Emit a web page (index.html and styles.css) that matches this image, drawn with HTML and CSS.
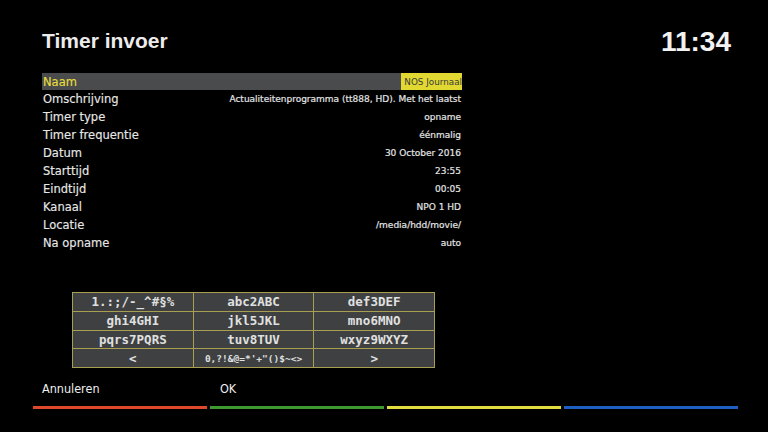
FILE: index.html
```html
<!DOCTYPE html>
<html>
<head>
<meta charset="utf-8">
<link rel="stylesheet" href="styles.css">
</head>
<body>
<div class="screen">
  <header class="header">
    <h1 class="title">Timer invoer</h1>
    <div class="clock">11:34</div>
  </header>
  <div class="list">
    <div class="row selected"><span class="label">Naam</span><span class="value edit">NOS Journaal</span></div>
    <div class="row"><span class="label">Omschrijving</span><span class="value">Actualiteitenprogramma (tt888, HD). Met het laatst</span></div>
    <div class="row"><span class="label">Timer type</span><span class="value">opname</span></div>
    <div class="row"><span class="label">Timer frequentie</span><span class="value">éénmalig</span></div>
    <div class="row"><span class="label">Datum</span><span class="value">30 October 2016</span></div>
    <div class="row"><span class="label">Starttijd</span><span class="value">23:55</span></div>
    <div class="row"><span class="label">Eindtijd</span><span class="value">00:05</span></div>
    <div class="row"><span class="label">Kanaal</span><span class="value">NPO 1 HD</span></div>
    <div class="row"><span class="label">Locatie</span><span class="value">/media/hdd/movie/</span></div>
    <div class="row"><span class="label">Na opname</span><span class="value">auto</span></div>
  </div>
  <div class="keyboard">
    <div class="key">1.:;/-_^#§%</div>
    <div class="key">abc2ABC</div>
    <div class="key">def3DEF</div>
    <div class="key">ghi4GHI</div>
    <div class="key">jkl5JKL</div>
    <div class="key">mno6MNO</div>
    <div class="key">pqrs7PQRS</div>
    <div class="key">tuv8TUV</div>
    <div class="key">wxyz9WXYZ</div>
    <div class="key">&lt;</div>
    <div class="key small">0,?!&amp;@=*'+"()$~&lt;&gt;</div>
    <div class="key">&gt;</div>
  </div>
  <div class="buttons">
    <span class="btn red-label">Annuleren</span>
    <span class="btn green-label">OK</span>
  </div>
  <div class="bars">
    <div class="bar red"></div>
    <div class="bar green"></div>
    <div class="bar yellow"></div>
    <div class="bar blue"></div>
  </div>
</div>
</body>
</html>
```
FILE: styles.css
```css
html, body {
  margin: 0;
  padding: 0;
  background: #000;
}
.screen {
  width: 768px;
  height: 432px;
  background: #000;
  display: flex;
  flex-direction: column;
  color: #e6e6e6;
  font-family: "DejaVu Sans", sans-serif;
  overflow: hidden;
}
.header {
  display: flex;
  justify-content: space-between;
  align-items: flex-start;
  padding: 26px 37px 0 42px;
  height: 46px;
}
.title {
  margin: 3px 0 0 0;
  font-family: "Liberation Sans", Arial, sans-serif;
  font-weight: bold;
  font-size: 21px;
  line-height: 24px;
  color: #ececec;
}
.clock {
  font-family: "Liberation Sans", Arial, sans-serif;
  font-weight: bold;
  font-size: 28px;
  line-height: 32px;
  color: #f2f2f2;
}
.list {
  margin-left: 42px;
  width: 420px;
  display: flex;
  flex-direction: column;
}
.row {
  height: 18px;
  display: flex;
  justify-content: space-between;
  align-items: center;
  padding-bottom: 3px;
  box-sizing: border-box;
}
.row.selected {
  background: #4a4b4d;
  height: 17px;
  margin-top: 1px;
  padding-bottom: 0;
  margin-bottom: 1px;
}
.label {
  font-size: 11.5px;
  color: #e8e8e8;
  padding-left: 1px;
  -webkit-text-stroke: 0.15px #e8e8e8;
}
.selected .label {
  color: #e8df3c;
  -webkit-text-stroke: 0.15px #e8df3c;
}
.value {
  font-size: 9px;
  color: #e4e4e4;
  padding-right: 1px;
  -webkit-text-stroke: 0.2px #e4e4e4;
}
.value.edit {
  background: #e1d832;
  color: #3a3a3a;
  -webkit-text-stroke: 0;
  font-size: 8.8px;
  align-self: stretch;
  display: flex;
  align-items: center;
  justify-content: flex-end;
  width: 61px;
  padding-right: 0;
}
.keyboard {
  margin: 39px 0 0 72px;
  width: 363px;
  display: grid;
  grid-template-columns: repeat(3, 1fr);
  grid-auto-rows: 17.75px;
  gap: 1px;
  background: #a8a050;
  border: 1px solid #a8a050;
  box-sizing: border-box;
}
.key {
  background: #3e4041;
  color: #e0e0e0;
  font-family: "DejaVu Sans Mono", monospace;
  font-weight: bold;
  font-size: 12.5px;
  display: flex;
  align-items: center;
  justify-content: center;
}
.key.small {
  font-size: 9.5px;
}
.buttons {
  display: flex;
  margin: 13px 0 0 42px;
  height: 14px;
  align-items: center;
}
.btn {
  font-family: "DejaVu Sans Condensed", "DejaVu Sans", sans-serif;
  font-size: 12.5px;
  color: #efefef;
}
.red-label {
  width: 178px;
}
.bars {
  display: flex;
  gap: 3px;
  margin: 11px 0 0 33px;
  width: 705px;
}
.bar {
  flex: 1;
  height: 3px;
}
.red { background: #e0482c; }
.green { background: #3e9a2e; }
.yellow { background: #e2dc40; }
.blue { background: #1f5fc4; }
```
